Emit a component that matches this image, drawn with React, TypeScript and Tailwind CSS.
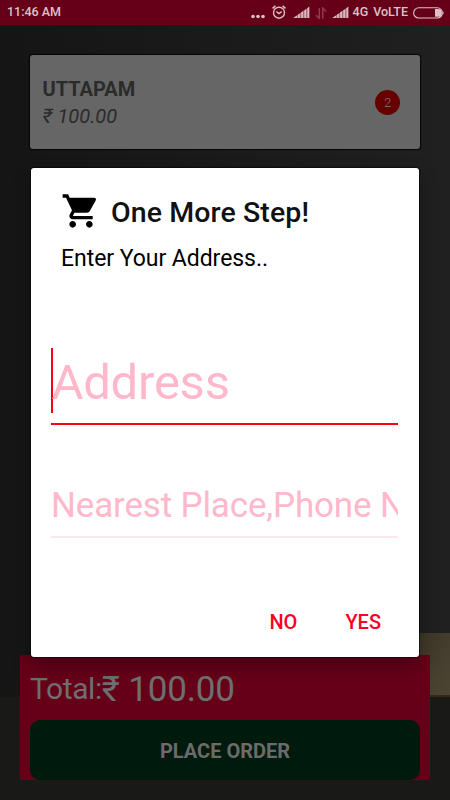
import { useState } from 'react'

function SignalIcon() {
  return (
    <svg width="17" height="13" viewBox="0 0 17 13" className="text-[#dcb9c1]">
      <path d="M.2 12 16.200.8V12z" fill="currentColor" opacity=".55" />
      <path d="M.5 12 4 9.600V12z M5 8.800l1.800-1.200V12H5z M8.200 6.500 10 5.300V12H8.200z M11.300 4.400l1.800-1.200V12h-1.800z M14.400 2.200l1.900-1.400V12h-1.900z" fill="currentColor" />
    </svg>
  )
}

function StatusBar() {
  return (
    <header className="flex h-[25px] shrink-0 items-center justify-between bg-[#660019] pr-[5px] pl-[7px] text-[12.5px] font-medium text-[#dfc0c7]">
      <span>11:46 AM</span>
      <div className="flex items-center">
        <svg width="15" height="12" viewBox="0 0 15 12" fill="currentColor" className="mr-[6px]">
          <circle cx="2" cy="9.500" r="1.800" />
          <circle cx="7" cy="9.500" r="1.800" />
          <circle cx="12" cy="9.500" r="1.800" />
        </svg>
        <svg width="14" height="14" viewBox="0 0 14 14" fill="none" stroke="currentColor" strokeWidth="1.4" className="mr-[7px] -mt-px">
          <circle cx="7" cy="7.700" r="5.500" />
          <path d="M4.300 6.500 7 8.600l2.600-2" />
          <path d="M.5 3.400 3.400.9M10.600.9l2.900 2.500" strokeWidth="1.500" />
        </svg>
        <SignalIcon />
        <svg width="12" height="12" viewBox="0 0 12 12" fill="none" stroke="#8f3c50" strokeWidth="1.500" className="mr-[5px] ml-[5px]">
          <path d="M4.300 1v10.500L1 8M7.700 11.500V1L11 4.500" />
        </svg>
        <SignalIcon />
        <span className="ml-[4px]">4G</span>
        <span className="ml-[5px]">VoLTE</span>
        <svg width="32" height="12" viewBox="0 0 32 12" className="ml-[5px]">
          <rect x=".6" y=".8" width="28.800" height="10.200" rx="5.100" fill="none" stroke="currentColor" strokeWidth="1.100" />
          <path d="M22 2h3a3.900 3.900 0 0 1 0 7.800h-3z" fill="currentColor" />
          <path d="M30.300 4.200q1.600 1.700 0 3.400z" fill="currentColor" />
        </svg>
      </div>
    </header>
  )
}

function CartItem({ name, price, count }: { name: string; price: string; count: number }) {
  return (
    <div className="mx-[30px] mt-[30px] flex h-[94px] items-center justify-between rounded-[3px] bg-[#666666] pr-5 pl-[12.5px] text-[20px] leading-[27px] text-[#2b2b2b] shadow-[0_0_1px_1px_#050505]">
      <div className="pt-[2px]">
        <h2 className="font-bold">{name}</h2>
        <p className="italic">{price}</p>
      </div>
      <span className="flex h-[25px] w-[25px] items-center justify-center rounded-full bg-[#660000] text-[13px] font-light text-[#8a7070]">
        {count}
      </span>
    </div>
  )
}

function CartIcon() {
  return (
    <svg width="40" height="40" viewBox="0 0 24 24" fill="#000">
      <path d="M7 18c-1.100 0-1.990.9-1.990 2S5.900 22 7 22s2-.9 2-2-.9-2-2-2zM1 2v2h2l3.600 7.590-1.350 2.450c-.16.280-.25.610-.25.960 0 1.100.9 2 2 2h12v-2H7.420c-.14 0-.25-.11-.25-.25l.03-.12.900-1.630h7.450c.750 0 1.410-.410 1.750-1.030l3.580-6.490c.080-.140.120-.310.120-.480 0-.550-.450-1-1-1H5.210l-.940-2H1zm16 16c-1.100 0-1.990.9-1.990 2s.890 2 1.990 2 2-.9 2-2-.9-2-2-2z" />
    </svg>
  )
}

function AddressDialog({ onClose }: { onClose: () => void }) {
  const [address, setAddress] = useState('')
  const [details, setDetails] = useState('')

  return (
    <div className="absolute top-[168px] left-[31px] flex h-[489px] w-[388px] flex-col rounded-[3px] bg-white text-black shadow-[0_8px_20px_0_rgba(0,0,0,0.3),0_0_1px_1px_rgba(0,0,0,0.5)]">
      <div className="flex items-center gap-[10px] pt-[23px] pl-[30px]">
        <CartIcon />
        <h1 className="pt-[3px] text-[28.500px] leading-[36px] font-medium tracking-[0.1px] text-[#111]">One More Step!</h1>
      </div>
      <p className="mt-[12px] pl-[30px] text-[23px] leading-[31px] tracking-[-0.05px]">Enter Your Address..</p>

      <div className="mt-[74px] pr-[21px] pl-[20px]">
        <div className="flex h-[77px] items-start border-b-2 border-[#fb0015]">
          <span className="h-[65px] w-[2px] shrink-0 bg-[#fb0015]" />
          <input
            value={address}
            onChange={(e) => setAddress(e.target.value)}
            placeholder="Address"
            className="-ml-[1.5px] h-[69px] w-full min-w-0 text-[49px] tracking-[-0.25px] outline-none placeholder:text-[#ffb8cb]"
          />
        </div>
        <input
          value={details}
          onChange={(e) => setDetails(e.target.value)}
          placeholder="Nearest Place,Phone No"
          className="mt-[53px] h-[60px] w-full border-b-2 border-[#ffe5ec] pb-[4px] text-[35px] tracking-[-0.16px] outline-none placeholder:text-[#ffb8cb]"
        />
      </div>

      <div className="mt-auto mb-[20px] flex justify-end gap-[48px] pr-[38px] text-[20px] leading-[30px] font-medium text-[#fb0022]">
        <button onClick={onClose}>NO</button>
        <button onClick={onClose}>YES</button>
      </div>
    </div>
  )
}

export default function App() {
  const [open, setOpen] = useState(true)

  return (
    <div className="relative flex h-[800px] w-[450px] flex-col overflow-hidden bg-linear-to-r from-[#151515] to-[#202020] font-[Roboto,sans-serif]">
      {/* wooden board and stone table showing around the footer */}
      <div className="absolute top-[633px] left-[400px] h-[64px] w-[50px] border-b-2 border-[#3a2813] bg-linear-to-br from-[#3a3325] to-[#4c4433]" />
      <div className="absolute top-[697px] left-0 h-[103px] w-full bg-[#191918]" />

      <StatusBar />
      <CartItem name="UTTAPAM" price="₹ 100.00" count={2} />

      <footer className="relative mx-5 mt-auto mb-5 flex h-[125px] flex-col justify-between rounded-[2px] bg-[#660019] px-[10px] text-[#6f6f6f]">
        <div className="flex items-start pt-[14px]">
          <span className="text-[30px] leading-[40px] tracking-[-0.4px]">Total:</span>
          <span className="text-[35px] leading-[42px] tracking-[-0.2px]">₹ 100.00</span>
        </div>
        <button
          onClick={() => setOpen(true)}
          className="h-[60px] rounded-[10px] bg-[#001a0d] pt-px text-[20px] font-bold text-[#6b6b6b]"
        >
          PLACE ORDER
        </button>
      </footer>

      {open && <AddressDialog onClose={() => setOpen(false)} />}
    </div>
  )
}
